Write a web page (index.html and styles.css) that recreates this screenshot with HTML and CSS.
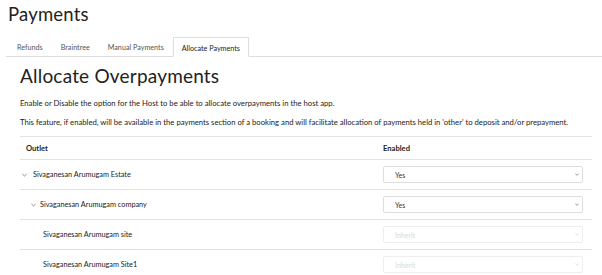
FILE: index.html
```html
<!DOCTYPE html>
<html lang="en">

<head>
    <meta charset="UTF-8">
    <title>Payments</title>
    <link rel="stylesheet" href="styles.css">
</head>

<body>
    <h1 class="page-title">Payments</h1>
    <nav class="tabs">
        <a href="#" class="tab">Refunds</a>
        <a href="#" class="tab">Braintree</a>
        <a href="#" class="tab">Manual Payments</a>
        <a href="#" class="tab active">Allocate Payments</a>
    </nav>
    <section class="panel">
        <h2 class="heading">Allocate Overpayments</h2>
        <p class="note">Enable or Disable the option for the Host to be able to allocate overpayments in the host app.</p>
        <p class="note">This feature, if enabled, will be available in the payments section of a booking and will facilitate allocation of payments held in 'other' to deposit and/or prepayment.</p>

        <div class="outlets">
            <div class="row head">
                <div class="cell">Outlet</div>
                <div class="cell">Enabled</div>
            </div>
            <div class="row">
                <div class="cell level-1">
                    <svg class="caret" viewBox="0 0 6 4"><polyline points="0.5,0.8 3,3.2 5.5,0.8" /></svg>
                    Sivaganesan Arumugam Estate
                </div>
                <div class="cell">
                    <div class="select-wrap">
                        <select class="select"><option>Yes</option></select>
                        <svg class="select-arrow" viewBox="0 0 6 4"><polyline points="0.5,0.8 3,3.2 5.5,0.8" /></svg>
                    </div>
                </div>
            </div>
            <div class="row">
                <div class="cell level-2">
                    <svg class="caret" viewBox="0 0 6 4"><polyline points="0.5,0.8 3,3.2 5.5,0.8" /></svg>
                    Sivaganesan Arumugam company
                </div>
                <div class="cell">
                    <div class="select-wrap">
                        <select class="select"><option>Yes</option></select>
                        <svg class="select-arrow" viewBox="0 0 6 4"><polyline points="0.5,0.8 3,3.2 5.5,0.8" /></svg>
                    </div>
                </div>
            </div>
            <div class="row">
                <div class="cell level-3">Sivaganesan Arumugam site</div>
                <div class="cell">
                    <div class="select-wrap disabled">
                        <select class="select" disabled><option>Inherit</option></select>
                        <svg class="select-arrow" viewBox="0 0 6 4"><polyline points="0.5,0.8 3,3.2 5.5,0.8" /></svg>
                    </div>
                </div>
            </div>
            <div class="row">
                <div class="cell level-3">Sivaganesan Arumugam Site1</div>
                <div class="cell">
                    <div class="select-wrap disabled">
                        <select class="select" disabled><option>Inherit</option></select>
                        <svg class="select-arrow" viewBox="0 0 6 4"><polyline points="0.5,0.8 3,3.2 5.5,0.8" /></svg>
                    </div>
                </div>
            </div>
        </div>
    </section>
</body>

</html>
```

FILE: styles.css
```css
* {
    margin: 0;
    padding: 0;
    box-sizing: border-box;
}

body {
    font-family: 'Lato', sans-serif;
    color: #222;
    background-color: #fff;
    overflow: hidden;
}

.page-title {
    font-size: 18.5px;
    line-height: 24px;
    font-weight: 400;
    padding: 2px 0 0 8px;
    height: 37px;
    letter-spacing: 0.2px;
}

.tabs {
    display: flex;
    margin-left: 6px;
    padding-left: 2px;
    border-bottom: 1px solid #ddd;
    height: 20px;
}

.tab {
    font-size: 7.2px;
    color: #555;
    text-decoration: none;
    padding: 6px 9px 0;
}

.tab.active {
    color: #222;
    background: #fff;
    border: 1px solid #ddd;
    border-bottom: 1px solid #fff;
    height: 20px;
    padding: 6px 8px 0;
}

.panel {
    padding: 7px 10px 0 20px;
}

.heading {
    font-size: 19px;
    line-height: 24px;
    font-weight: 400;
    letter-spacing: 0.2px;
    margin-bottom: 10px;
}

.note {
    font-size: 7.7px;
    line-height: 10px;
    margin-bottom: 9px;
}

.row {
    display: grid;
    grid-template-columns: 363px 1fr;
    border-top: 1px solid #e3e3e3;
    height: 30px;
    align-items: center;
}

.row.head {
    height: 23px;
    font-weight: 700;
}

.cell {
    font-size: 7.3px;
    display: flex;
    align-items: center;
}

.head .cell {
    font-size: 7.6px;
}

.head .cell:first-child {
    padding-left: 6px;
}

.level-1 {
    padding-left: 2px;
}

.level-2 {
    padding-left: 11px;
}

.level-3 {
    padding-left: 23px;
}

.caret {
    width: 5px;
    height: 4px;
    margin-right: 6px;
    fill: none;
    stroke: #555;
    stroke-width: 0.8;
}

.level-2 .caret {
    margin-right: 4px;
}

.select-wrap {
    position: relative;
    width: 200px;
    height: 17px;
}

.select {
    appearance: none;
    width: 100%;
    height: 100%;
    font-family: 'Lato', sans-serif;
    font-size: 7px;
    color: #333;
    background: #fff;
    border: 1px solid #ddd;
    border-radius: 2px;
    padding-left: 11px;
    outline: none;
}

.select-arrow {
    position: absolute;
    right: 4px;
    top: 7px;
    width: 4px;
    height: 3px;
    fill: none;
    stroke: #555;
    stroke-width: 0.9;
}

.disabled .select {
    color: #c8c8c8;
    border-color: #e8e8e8;
}

.disabled .select-arrow {
    stroke: #ccc;
}
```
